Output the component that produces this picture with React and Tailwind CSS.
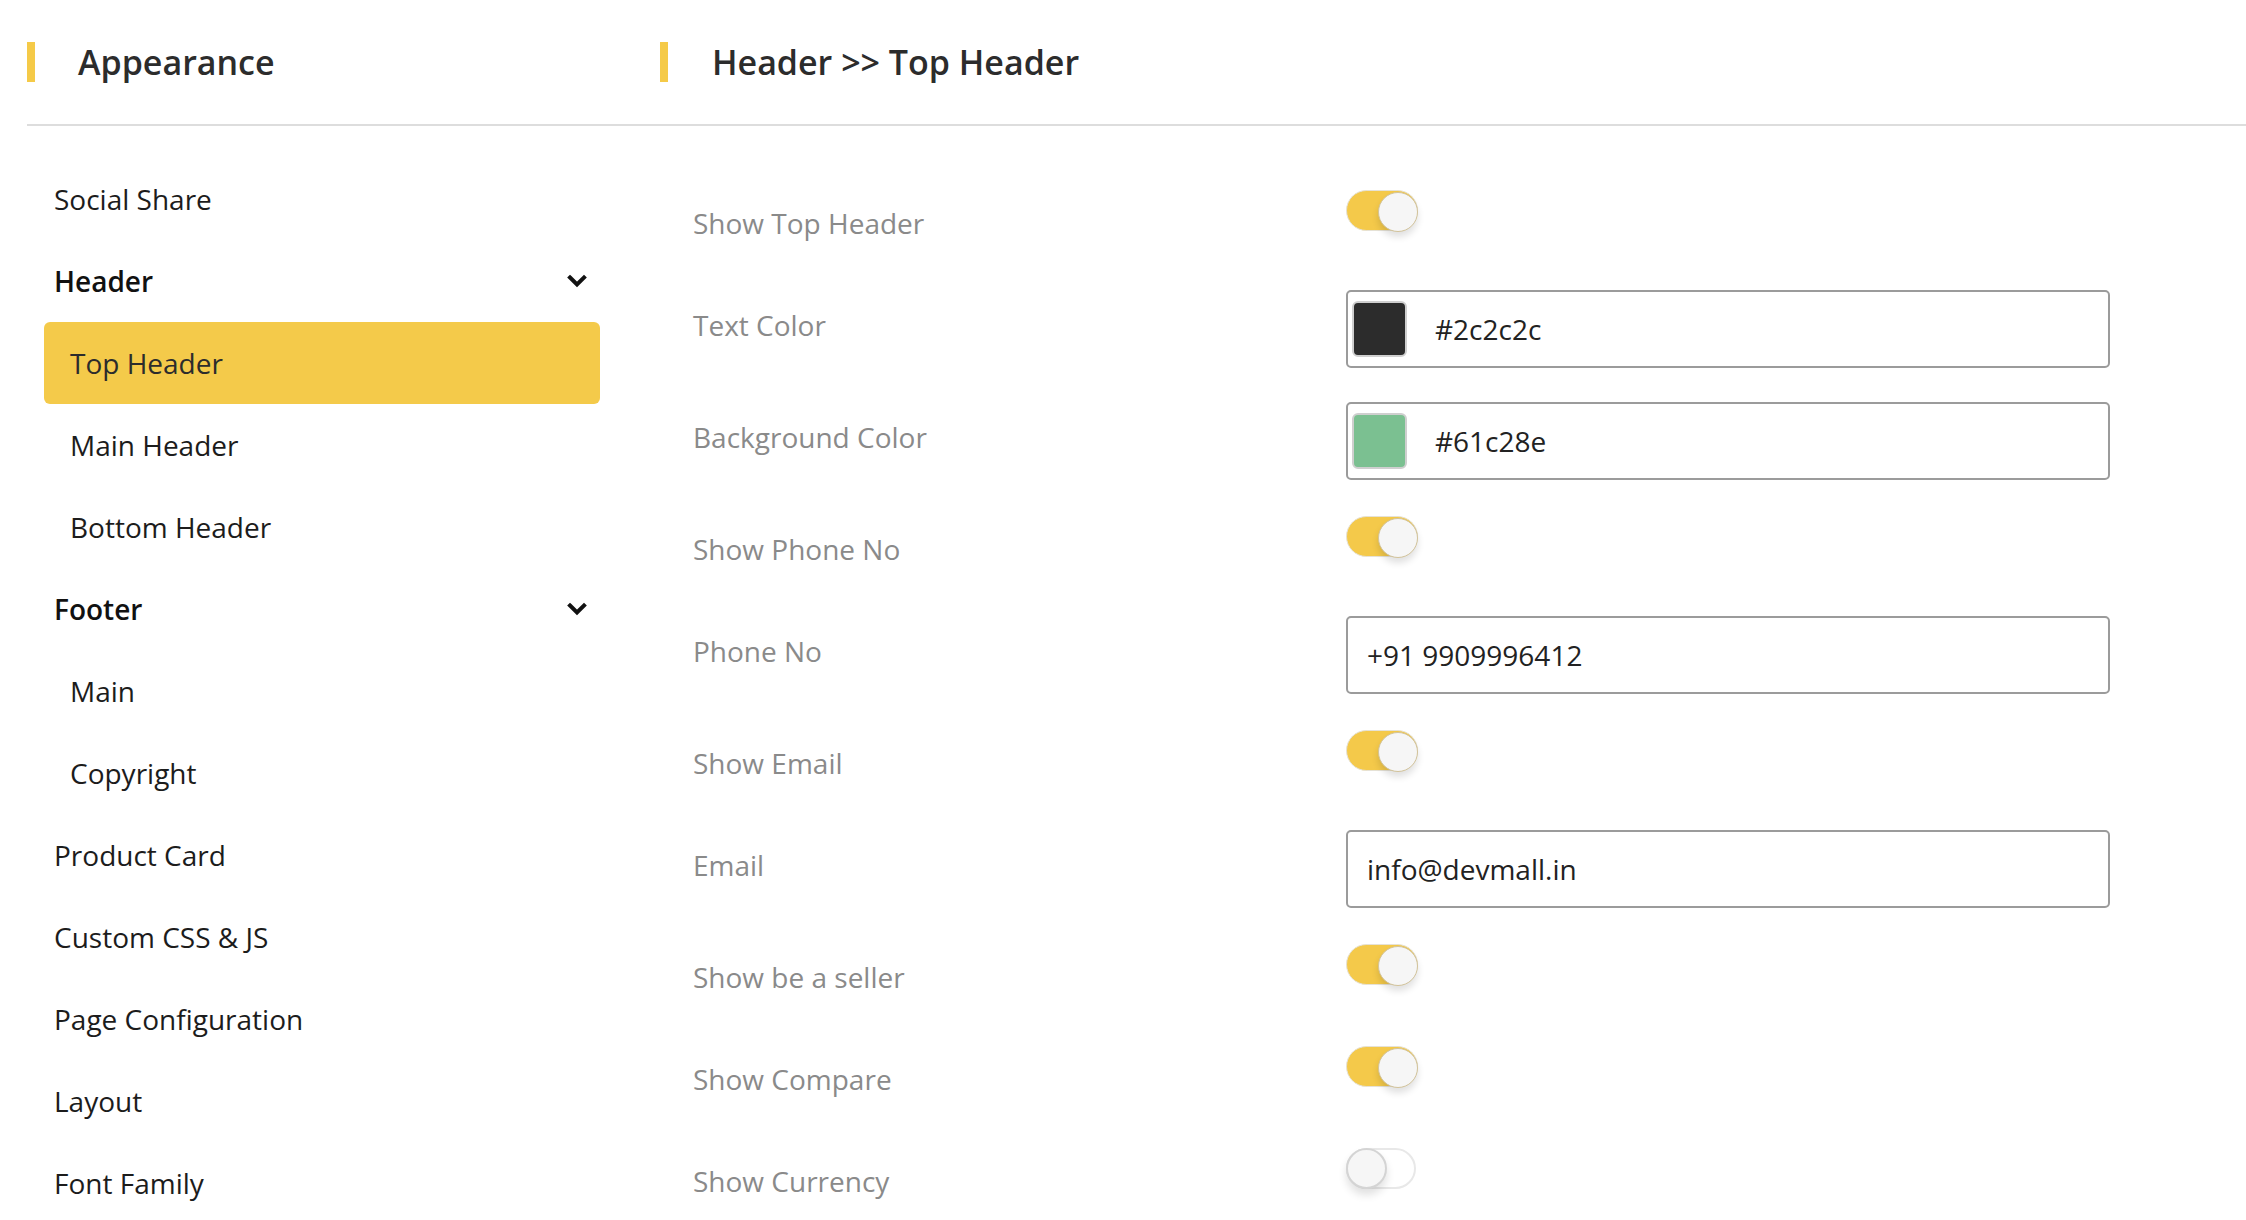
const menu = [
  { label: 'Social Share', level: 0 },
  { label: 'Header', level: 0, group: true },
  { label: 'Top Header', level: 1, active: true },
  { label: 'Main Header', level: 1 },
  { label: 'Bottom Header', level: 1 },
  { label: 'Footer', level: 0, group: true },
  { label: 'Main', level: 1 },
  { label: 'Copyright', level: 1 },
  { label: 'Product Card', level: 0 },
  { label: 'Custom CSS & JS', level: 0 },
  { label: 'Page Configuration', level: 0 },
  { label: 'Layout', level: 0 },
  { label: 'Font Family', level: 0 },
];

const fields = [
  { label: 'Show Top Header', type: 'toggle', on: true },
  { label: 'Text Color', type: 'color', value: '#2c2c2c', swatch: 'bg-[#2c2c2c]' },
  { label: 'Background Color', type: 'color', value: '#61c28e', swatch: 'bg-[#7bc091]' },
  { label: 'Show Phone No', type: 'toggle', on: true },
  { label: 'Phone No', type: 'text', value: '+91 9909996412' },
  { label: 'Show Email', type: 'toggle', on: true },
  { label: 'Email', type: 'text', value: 'info@devmall.in' },
  { label: 'Show be a seller', type: 'toggle', on: true },
  { label: 'Show Compare', type: 'toggle', on: true },
  { label: 'Show Currency', type: 'toggle', on: false },
];

function Chevron() {
  return (
    <svg className="mr-[13px]" width="20" height="14" viewBox="0 0 20 14" fill="none">
      <path d="M3 3.5 L10 10.5 L17 3.5" stroke="#111111" strokeWidth="4" strokeLinecap="square" strokeLinejoin="miter" />
    </svg>
  );
}

function Toggle({ on }) {
  return (
    <div className="mb-[24px]">
      <div
        className={
          on
            ? 'relative w-[72px] h-[41px] rounded-full bg-[#f4c94a] border border-[#e6e2d6]'
            : 'relative w-[70px] h-[41px] rounded-full bg-white border-2 border-[#e8e8e8]'
        }
      >
        <div
          className={
            on
              ? 'absolute right-[-1px] top-[1px] w-[40px] h-[40px] rounded-full bg-[#f6f6f6] border border-[#d2c39a] shadow-[0_5px_7px_rgba(0,0,0,0.12)]'
              : 'absolute left-[-2px] top-[-2px] w-[41px] h-[41px] rounded-full bg-[#f6f6f6] border-2 border-[#d4d4d4] shadow-[0_6px_8px_rgba(0,0,0,0.12)]'
          }
        />
      </div>
    </div>
  );
}

function Field({ f }) {
  const isToggle = f.type === 'toggle';
  return (
    <div className={isToggle ? 'flex items-center h-[102px]' : 'flex items-center h-[112px]'}>
      <div className={(isToggle ? 'pt-[2px] ' : 'pb-[9px] ') + 'w-[653px] text-[28px] text-[#8a8a8a]'}>{f.label}</div>
      {isToggle && <Toggle on={f.on} />}
      {f.type === 'color' && (
        <div className="flex items-center w-[764px] h-[78px] border-2 border-[#9b9b9b] rounded-[5px] bg-white">
          <div className={`ml-[4px] w-[55px] h-[56px] rounded-[6px] border-2 border-[#cfcfcf] ${f.swatch}`} />
          <span className="ml-[28px] text-[28px] text-[#222222]">{f.value}</span>
        </div>
      )}
      {f.type === 'text' && (
        <div className="flex items-center w-[764px] h-[78px] border-2 border-[#9b9b9b] rounded-[5px] bg-white px-[19px]">
          <span className="text-[28px] text-[#222222]">{f.value}</span>
        </div>
      )}
    </div>
  );
}

export default function App() {
  return (
    <div className="min-h-screen bg-white font-['Open_Sans',sans-serif] text-[#1c1c1c]">
      <div className="ml-[27px] flex items-center h-[126px] border-b-2 border-[#dddddd]">
        <div className="w-[633px] flex items-center">
          <span className="w-[8px] h-[40px] bg-[#f5ca48]" />
          <h1 className="ml-[43px] text-[34px] font-semibold text-[#2c2c2c]">Appearance</h1>
        </div>
        <div className="flex items-center">
          <span className="w-[8px] h-[40px] bg-[#f5ca48]" />
          <h1 className="ml-[44px] text-[34px] font-semibold text-[#2c2c2c]">Header &gt;&gt; Top Header</h1>
        </div>
      </div>

      <div className="flex">
        <nav className="ml-[44px] w-[556px] pt-[32px]">
          {menu.map((m) => (
            <div
              key={m.label}
              className={
                'flex items-center justify-between h-[82px] text-[28px] ' +
                (m.level === 1 ? 'pl-[26px] ' : 'pl-[10px] ') +
                (m.active ? 'bg-[#f4ca4a] rounded-[6px] text-[#2c2c2c] ' : '') +
                (m.group ? 'font-semibold text-[#111111]' : '')
              }
            >
              <span>{m.label}</span>
              {m.group && <Chevron />}
            </div>
          ))}
        </nav>

        <div className="ml-[93px] pt-[45px]">
          {fields.map((f) => (
            <Field key={f.label} f={f} />
          ))}
        </div>
      </div>
    </div>
  );
}
